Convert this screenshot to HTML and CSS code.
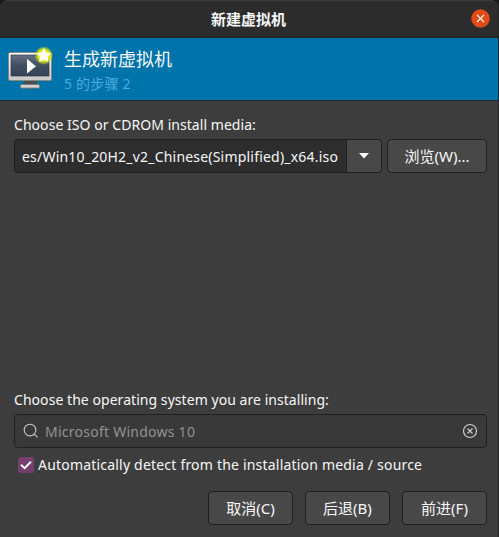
FILE: index.html
```html
<!DOCTYPE html>
<html lang="zh-CN">
<head>
<meta charset="utf-8">
<title>新建虚拟机</title>
<link rel="stylesheet" href="styles.css">
</head>
<body>
<div class="window">
  <header class="titlebar">
    <h1 class="title">新建虚拟机</h1>
    <button class="close" aria-label="关闭"><svg width="19" height="19" viewBox="0 0 19 19"><circle cx="9.5" cy="9.5" r="9.3" fill="#e24a18"/><path d="M5.9 5.9l7.2 7.2M13.1 5.9l-7.2 7.2" stroke="#fff" stroke-width="1.3"/></svg></button>
  </header>
  <section class="banner">
    <svg class="vm" width="48" height="48" viewBox="0 0 48 48">
      <defs>
        <linearGradient id="frame" x1="0" y1="0" x2="0" y2="1"><stop offset="0" stop-color="#fff"/><stop offset="1" stop-color="#c8c8c6"/></linearGradient>
        <linearGradient id="screen" x1="0" y1="0" x2="0" y2="1"><stop offset="0" stop-color="#667083"/><stop offset=".5" stop-color="#414d61"/><stop offset="1" stop-color="#354257"/></linearGradient>
        <radialGradient id="glow"><stop offset=".5" stop-color="#eef200"/><stop offset=".72" stop-color="#d4e010" stop-opacity=".85"/><stop offset="1" stop-color="#b8d820" stop-opacity="0"/></radialGradient>
      </defs>
      <path d="M18 34h13v5H18z" fill="#4f504e"/>
      <rect x="14.5" y="38.5" width="19" height="3.6" rx="1" fill="#d4d4d2" stroke="#777875"/>
      <rect x="2.5" y="6.5" width="43" height="28" rx="1.5" fill="url(#frame)" stroke="#858783"/>
      <rect x="5" y="9" width="38" height="21" fill="url(#screen)" stroke="#303a49" stroke-width=".7"/>
      <path d="M21 13v14.5l9-7.25z" fill="#fff"/>
      <circle cx="37.8" cy="9.5" r="9.4" fill="url(#glow)"/>
      <path d="M37.8 2.6l2.1 4.2 4.6.6-3.3 3.2.8 4.8-4.2-2.2-4.2 2.2.8-4.8-3.3-3.2 4.6-.6z" fill="#fff" stroke="#fff" stroke-width=".7" stroke-linejoin="round"/>
    </svg>
    <div>
      <h2 class="heading">生成新虚拟机</h2>
      <p class="step">5 的步骤 2</p>
    </div>
  </section>
  <main class="page">
    <p class="label media">Choose ISO or CDROM install media:</p>
    <div class="row">
      <div class="combo">
        <div class="path"><span>es/Win10_20H2_v2_Chinese(Simplified)_x64.iso</span></div>
        <button class="drop" aria-label="选择"><svg width="10" height="6" viewBox="0 0 10 6"><path d="M0 0h10L5 5.5z" fill="#fff"/></svg></button>
      </div>
      <button class="btn browse">浏览(W)...</button>
    </div>
    <div class="space"></div>
    <p class="label os">Choose the operating system you are installing:</p>
    <div class="search">
      <svg width="16" height="16" viewBox="0 0 16 16" fill="none" stroke="#c4c4c4" stroke-width="1.15"><circle cx="7" cy="7" r="5.8"/><path d="M11.2 11.2l3.3 3.2"/></svg>
      <span class="query">Microsoft Windows 10</span>
      <svg width="16" height="16" viewBox="0 0 16 16" fill="none" stroke="#d0d0d0" stroke-width="1.15"><circle cx="8" cy="8" r="6.5"/><path d="M5.5 5.5l5 5M10.5 5.5l-5 5"/></svg>
    </div>
    <div class="check">
      <svg width="16" height="16" viewBox="0 0 16 16"><rect width="16" height="16" rx="2.5" fill="#763f70"/><path d="M3 7.7l3.7 3.5L13 4.7" fill="none" stroke="#fff" stroke-width="1.9"/></svg>
      <span class="label auto">Automatically detect from the installation media / source</span>
    </div>
    <footer class="actions">
      <button class="btn">取消(C)</button>
      <button class="btn">后退(B)</button>
      <button class="btn">前进(F)</button>
    </footer>
  </main>
</div>
</body>
</html>
```
FILE: styles.css
```css
* { box-sizing: border-box; }
body, h1, h2, p { margin: 0; }
body { background: #1a1a1a; }
.window {
  height: 537px;
  width: 499px;
  display: flex;
  flex-direction: column;
  background: #3d3d3d;
  border-right: 1px solid #242424;
  border-radius: 8px 8px 0 0;
  overflow: hidden;
  color: #f7f7f7;
  font: 14px/20px "Noto Sans", "Noto Sans CJK SC", sans-serif;
}
.titlebar {
  height: 38px;
  flex: none;
  display: grid;
  grid-template-columns: 26px 1fr 26px;
  align-items: center;
  background: #2c2c2c;
  border-top: 1px solid #3b3b3b;
  border-bottom: 2px solid #232323;
}
.title { grid-column: 2; text-align: center; font-size: 15px; font-weight: 700; margin-left: -1px; }
button { padding: 0; border: 0; background: none; color: inherit; font: inherit; }
.close { height: 19px; width: 19px; margin-left: -1px; }
.close svg { display: block; }
.banner {
  height: 63px;
  flex: none;
  display: flex;
  padding: 5px 0 0 6px;
  background: #0073aa;
  border-bottom: 1px solid #202b31;
}
.vm { margin: 3px 10px 0 0; }
.heading { font-size: 18px; line-height: 26px; font-weight: 400; margin-top: 3px; }
.step { color: #4daae0; font-size: 14px; line-height: 24px; letter-spacing: .2px; }
.page { flex: 1; display: flex; flex-direction: column; padding: 14px 11px 12px 14px; }
.label { white-space: nowrap; height: 20px; letter-spacing: .05px; }
.row { display: flex; gap: 5px; margin-top: 4px; height: 34px; }
.combo { display: flex; width: 368px; border: 1px solid #202020; border-radius: 4px; background: #2d2d2d; overflow: hidden; }
.path { flex: 1; padding-left: 7px; line-height: 33px; white-space: nowrap; letter-spacing: .2px; }
.drop { width: 35px; border-left: 1px solid #202020; background: #484848; display: grid; place-items: center; }
.btn { width: 85px; height: 34px; border: 1px solid #202020; border-radius: 4px; background: #484848; font-size: 15px; line-height: 31px; white-space: nowrap; }
.browse { width: 100px; }
.space { flex: 1; }
.search { margin-top: 4px; height: 34px; flex: none; display: flex; align-items: center; padding: 0 8px; border: 1px solid #202020; border-radius: 4px; background: #393939; }
.query { flex: 1; color: #929292; margin-left: 6px; padding-top: 2px; letter-spacing: .25px; }
.check { display: flex; align-items: center; height: 20px; margin-top: 7px; padding-left: 4px; gap: 4px; }
.auto { letter-spacing: .2px; }
.actions { display: flex; justify-content: flex-end; gap: 12px; margin-top: 16px; }
```
